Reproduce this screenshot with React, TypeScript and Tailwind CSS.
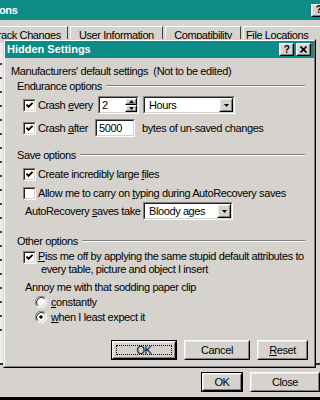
import React from "react";

const grey = "bg-[#d6d3ce]";
const teal = "bg-[#0d8b87]";

function U({ children }: { children: React.ReactNode }) {
  return <span className="underline underline-offset-[1px] decoration-1">{children}</span>;
}

function Sunken({ className, children }: { className?: string; children: React.ReactNode }) {
  return (
    <div className={`flex border border-t-[#808080] border-l-[#808080] border-r-white border-b-white ${className ?? ""}`}>
      <div className="flex flex-1 min-w-0 bg-white border border-t-[#202020] border-l-[#202020] border-r-[#d6d3ce] border-b-[#d6d3ce]">
        {children}
      </div>
    </div>
  );
}

function Raised({ className, children }: { className?: string; children?: React.ReactNode }) {
  return (
    <div className={`flex border border-t-white border-l-white border-r-black border-b-black ${className ?? ""}`}>
      <div className={`flex flex-1 items-center justify-center ${grey} border border-t-[#e8e6e2] border-l-[#e8e6e2] border-r-[#808080] border-b-[#808080]`}>
        {children}
      </div>
    </div>
  );
}

function Check({ checked }: { checked: boolean }) {
  return (
    <Sunken className="w-[13px] h-[13px] shrink-0">
      <div className="flex flex-1 items-center justify-center">
        {checked && (
          <svg width="7" height="7" viewBox="0 0 7 7">
            <polyline points="0.5,2.6 2.5,4.8 6.5,0.8" stroke="#000" strokeWidth="1.9" fill="none" />
          </svg>
        )}
      </div>
    </Sunken>
  );
}

function Radio({ on }: { on: boolean }) {
  return (
    <svg width="12" height="12" viewBox="0 0 12 12" className="shrink-0">
      <circle cx="6" cy="6" r="5" fill="#fff" />
      <path d="M10.24 1.76 A6 6 0 0 0 1.76 10.24" stroke="#808080" strokeWidth="1" fill="none" />
      <path d="M9.5 2.5 A5 5 0 0 0 2.5 9.5" stroke="#202020" strokeWidth="1" fill="none" />
      <path d="M10.24 1.76 A6 6 0 0 1 1.76 10.24" stroke="#fff" strokeWidth="1" fill="none" />
      <path d="M9.5 2.5 A5 5 0 0 1 2.5 9.5" stroke="#d6d3ce" strokeWidth="1" fill="none" />
      {on && <circle cx="6" cy="6" r="1.8" fill="#000" />}
    </svg>
  );
}

function Arrow({ up }: { up?: boolean }) {
  return (
    <svg width="5" height="3" viewBox="0 0 5 3">
      <polygon points={up ? "2.5,0 5,3 0,3" : "0,0 5,0 2.5,3"} fill="#000" />
    </svg>
  );
}

function Select({ value, w }: { value: string; w: string }) {
  return (
    <Sunken className={`${w} h-[18px]`}>
      <span className="flex-1 pl-[4px] leading-[14px]">{value}</span>
      <Raised className="w-[14px] h-full">
        <Arrow />
      </Raised>
    </Sunken>
  );
}

function Group({ title }: { title: string }) {
  return (
    <div className="flex items-center h-[14px] pl-[12px] pr-[9px]">
      <span className="leading-[14px]">{title}</span>
      <span className="flex-1 ml-[4px] h-[2px] border-t border-t-[#808080] border-b border-b-white" />
    </div>
  );
}

function CheckRow({ checked, children, className }: { checked: boolean; children: React.ReactNode; className?: string }) {
  return (
    <div className={`flex items-center h-[14px] pl-[18px] gap-[2px] ${className ?? ""}`}>
      <Check checked={checked} />
      <span className="leading-[14px] whitespace-nowrap">{children}</span>
    </div>
  );
}

function RadioRow({ on, children, className }: { on: boolean; children: React.ReactNode; className?: string }) {
  return (
    <div className={`flex items-center h-[14px] pl-[30px] gap-[4px] ${className ?? ""}`}>
      <Radio on={on} />
      <span className="leading-[14px]">{children}</span>
    </div>
  );
}

function Button({ w, def, focus, children }: { w: string; def?: boolean; focus?: boolean; children: React.ReactNode }) {
  if (def) {
    return (
      <div className={`flex ${w} h-[20px] border border-black`}>
        <Raised className="flex-1">
          {focus ? (
            <span className="flex flex-1 self-stretch m-[2px] items-center justify-center border border-dotted border-black">
              {children}
            </span>
          ) : (
            children
          )}
        </Raised>
      </div>
    );
  }
  return <Raised className={`${w} h-[20px]`}>{children}</Raised>;
}

function TitleBtn({ children }: { children: React.ReactNode }) {
  return (
    <Raised className="w-[15px] h-[13px]">
      <span className="text-[10px] font-bold leading-none">{children}</span>
    </Raised>
  );
}

export default function App() {
  return (
    <div className={`relative w-[320px] h-[400px] overflow-hidden ${grey} text-black text-[11px] tracking-[-0.4px] font-['Liberation_Sans',Arial,sans-serif]`}>
      {/* background Options window */}
      <div className="flex flex-col h-full">
        <div className={`flex items-center justify-between h-[20px] ${teal}`}>
          <span className="text-white font-bold text-[11px] leading-none ml-[-1px]">ons</span>
          <div className="mr-[-6px]">
            <TitleBtn>?</TitleBtn>
          </div>
        </div>

        <div className="flex h-[17px] mt-[6px] ml-[-14px]">
          <div className="flex items-center justify-center w-[85px] border-t border-t-white border-r border-r-[#404040]">Track Changes</div>
          <div className="flex items-center justify-center w-[97px] ml-[2px] border-t border-t-white border-l border-l-white border-r border-r-[#404040]">User Information</div>
          <div className="flex items-center justify-center w-[79px] ml-[2px] border-t border-t-white border-l border-l-white border-r border-r-[#404040]">Compatibility</div>
          <div className="flex items-center w-[80px] ml-[2px] pl-[2px] border-t border-t-white border-l border-l-white">File Locations</div>
        </div>

        <div className="flex flex-1 border-b-2 border-b-[#303030]">
          <div className="flex flex-col w-[3px] bg-[#ececec] pt-[20px] gap-[12px]">
            {Array.from({ length: 20 }).map((_, i) => (
              <span key={i} className="w-[2px] h-[2px] bg-[#404040]" />
            ))}
          </div>
        </div>

        <div className="flex h-[32px] pt-[7px] pl-[201px] gap-[7px]">
          <Button w="w-[66px]" def>OK</Button>
          <Button w="w-[70px] shrink-0">Close</Button>
        </div>
        <div className="h-[3px] bg-black" />
      </div>

      {/* Hidden Settings dialog */}
      <div className="absolute left-[3px] top-[39px] w-[313px] h-[329px] flex border border-t-[#d6d3ce] border-l-[#d6d3ce] border-r-black border-b-black">
        <div className={`flex flex-col flex-1 ${grey} border border-t-white border-l-white border-r-[#808080] border-b-[#808080]`}>
          <div className={`flex items-center h-[17px] ${teal} pl-[2px] pr-[3px]`}>
            <span className="flex-1 text-white font-bold text-[11px] tracking-normal leading-none">Hidden Settings</span>
            <div className="flex gap-[2px]">
              <TitleBtn>?</TitleBtn>
              <TitleBtn>
                <svg width="7" height="7" viewBox="0 0 7 7">
                  <path d="M0.5 0.5 L6.5 6.5 M6.5 0.5 L0.5 6.5" stroke="#000" strokeWidth="1.6" />
                </svg>
              </TitleBtn>
            </div>
          </div>

          <div className="mt-[6px] h-[14px] pl-[6px] leading-[14px] whitespace-pre">Manufacturers' default settings  (Not to be edited)</div>

          <div className="mt-[1px]">
            <Group title="Endurance options" />
          </div>

          <div className="flex items-center h-[18px] mt-[3px] pl-[18px]">
            <Check checked />
            <span className="w-[62px] pl-[2px] leading-[14px]">Crash <U>e</U>very</span>
            <Sunken className="w-[41px] h-[18px]">
              <span className="flex-1 pl-[2px] leading-[14px]">2</span>
              <div className="flex flex-col w-[12px]">
                <Raised className="flex-1"><Arrow up /></Raised>
                <Raised className="flex-1"><Arrow /></Raised>
              </div>
            </Sunken>
            <div className="ml-[4px]">
              <Select value="Hours" w="w-[92px]" />
            </div>
          </div>

          <div className="flex items-center h-[18px] mt-[5px] pl-[18px]">
            <Check checked />
            <span className="w-[59px] pl-[2px] leading-[14px]">Crash <U>a</U>fter</span>
            <Sunken className="w-[40px] h-[18px]">
              <span className="flex-1 pl-[2px] leading-[14px]">5000</span>
            </Sunken>
            <span className="ml-[7px] leading-[14px]">bytes of un-saved changes</span>
          </div>

          <div className="mt-[11px]">
            <Group title="Save options" />
          </div>

          <CheckRow checked className="mt-[5px]">Create incredibly large <U>f</U>iles</CheckRow>
          <CheckRow checked={false} className="mt-[5px]">Allow me to carry on <U>t</U>yping during AutoRecovery saves</CheckRow>

          <div className="flex items-center h-[18px] mt-[2px] pl-[20px]">
            <span className="w-[118px] leading-[14px]">AutoRecovery <U>s</U>aves take</span>
            <Select value="Bloody ages" w="w-[90px]" />
          </div>

          <div className="mt-[14px]">
            <Group title="Other options" />
          </div>

          <div className="flex items-start mt-[2px] pl-[18px] gap-[2px]">
            <div className="mt-[1px]">
              <Check checked />
            </div>
            <div className="flex flex-col leading-[13px]">
              <span><U>P</U>iss me off by applying the same stupid default attributes to</span>
              <span className="pl-[3px]">every table, picture and object I insert</span>
            </div>
          </div>

          <div className="mt-[4px] h-[14px] pl-[20px] leading-[14px]">Annoy me with that sodding paper clip</div>

          <RadioRow on={false} className="mt-[1px]"><U>c</U>onstantly</RadioRow>
          <RadioRow on className="mt-[1px]"><U>w</U>hen I least expect it</RadioRow>

          <div className="flex justify-end gap-[7px] pr-[6px] mt-[16px]">
            <Button w="w-[66px]" def focus>OK</Button>
            <Button w="w-[66px]">Cancel</Button>
            <Button w="w-[51px]"><U>R</U>eset</Button>
          </div>
        </div>
      </div>
    </div>
  );
}
